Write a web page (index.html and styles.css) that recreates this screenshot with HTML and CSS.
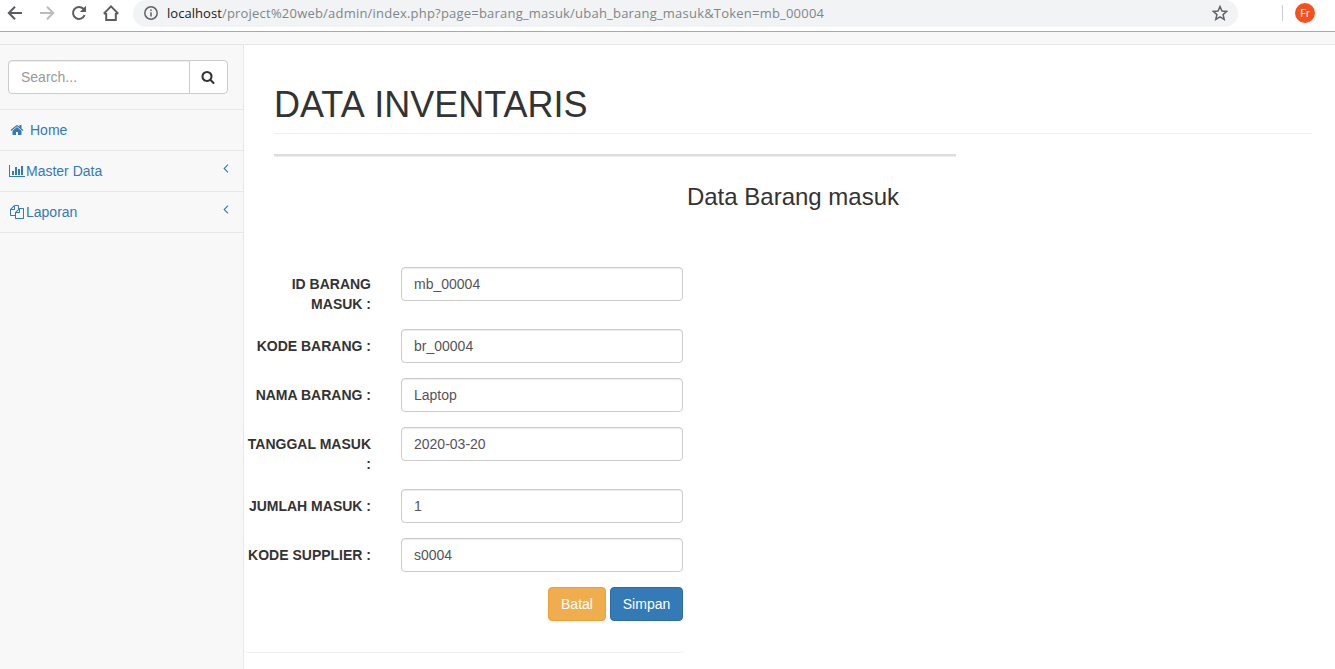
FILE: index.html
```html
<!DOCTYPE html>
<html lang="id">
<head>
<meta charset="utf-8">
<title>Data Inventaris</title>
<link rel="stylesheet" href="styles.css">
</head>
<body>
<header class="browser">
  <nav class="browser-nav">
    <svg class="tool" viewBox="0 0 16 16"><path d="M15 8H2M8 1.800L1.800 8 8 14.200"/></svg>
    <svg class="tool tool-off" viewBox="0 0 16 16"><path d="M1 8h13M8 1.800L14.200 8 8 14.200"/></svg>
    <svg class="tool" viewBox="0 0 16 16"><path d="M13.600 10.200A6 6 0 1 1 12.400 3.800L14 5.400"/><path class="solid" d="M15 .8V7H8.800z"/></svg>
    <svg class="tool" viewBox="0 0 16 16"><path d="M3.200 8v7h9.600V8M.8 8.600L8 1.400l7.200 7.200M.8 8.500h2.400M12.800 8.500h2.400"/></svg>
  </nav>
  <div class="address">
    <svg class="info" viewBox="0 0 14 14"><circle cx="7" cy="7" r="6.200"/><path d="M7 6.200v4.300M7 3.500v1.500"/></svg>
    <span class="url"><b>localhost</b>/project%20web/admin/index.php?page=barang_masuk/ubah_barang_masuk&amp;Token=mb_00004</span>
    <svg class="star" viewBox="0 0 14 14"><path d="M7 1.300l1.700 3.900 4.200.4-3.200 2.800 1 4.200L7 10.400l-3.700 2.200 1-4.200L1.100 5.600l4.200-.4z"/></svg>
  </div>
  <div class="profile"><span class="avatar">Fr</span></div>
</header>
<div class="navbar"></div>
<div class="layout">
  <aside class="sidebar">
    <form class="search">
      <input class="search-input" type="text" placeholder="Search...">
      <button class="search-button" type="button" aria-label="Search"><svg class="fa" viewBox="0 0 1792 1792"><path d="M1216 832q0-185-131.500-316.500t-316.500-131.500-316.500 131.500-131.500 316.500 131.500 316.500 316.500 131.500 316.500-131.500 131.500-316.500zm512 832q0 52-38 90t-90 38q-54 0-90-38l-343-342q-179 124-399 124-143 0-273.500-55.500t-225-150-150-225-55.500-273.500 55.500-273.500 150-225 225-150 273.500-55.500 273.500 55.500 225 150 150 225 55.500 273.500q0 220-124 399l343 343q37 37 37 90z"/></svg></button>
    </form>
    <a class="item item-home"><svg class="fa" viewBox="0 0 1792 1792"><path d="M1472 992v480q0 26-19 45t-45 19h-384v-384h-256v384h-384q-26 0-45-19t-19-45v-480q0-1 .5-3t.5-3l575-474 575 474q1 2 1 6zm223-69l-62 74q-8 9-21 11h-3q-13 0-21-7l-692-577-692 577q-12 8-24 7-13-2-21-11l-62-74q-8-10-7-23.500t11-21.500l719-599q32-26 76-26t76 26l244 204v-195q0-14 9-23t23-9h192q14 0 23 9t9 23v408l219 182q10 8 11 21.500t-7 23.500z"/></svg><span class="item-text">Home</span></a>
    <a class="item"><svg class="fa fa-wide" viewBox="0 0 2048 1792"><path d="M640 896v512h-256v-512h256zm384-512v1024h-256v-1024h256zm1024 1152v128h-2048v-1536h128v1408h1920zm-640-896v768h-256v-768h256zm384-384v1152h-256v-1152h256z"/></svg><span class="item-text">Master Data</span><svg class="angle" viewBox="0 0 6 9"><path d="M5 .7L1.200 4.500 5 8.300"/></svg></a>
    <a class="item item-files"><svg class="fa" viewBox="0 0 1792 1792"><path d="M1696 384q40 0 68 28t28 68v1216q0 40-28 68t-68 28h-960q-40 0-68-28t-28-68v-288h-544q-40 0-68-28t-28-68v-672q0-40 20-88t48-76l408-408q28-28 76-48t88-20h416q40 0 68 28t28 68v328q68-40 128-40h416zm-544 213l-299 299h299v-299zm-640-384l-299 299h299v-299zm196 647l316-316v-416h-384v416q0 40-28 68t-68 28h-416v640h512v-256q0-40 20-88t48-76zm956 804v-1152h-384v416q0 40-28 68t-68 28h-416v640h896z"/></svg><span class="item-text">Laporan</span><svg class="angle" viewBox="0 0 6 9"><path d="M5 .7L1.200 4.500 5 8.300"/></svg></a>
  </aside>
  <main class="content">
    <h1 class="page-title">DATA INVENTARIS</h1>
    <div class="rule"></div>
    <h3 class="form-title">Data Barang masuk</h3>
    <form class="form">
      <div class="row"><label class="label">ID BARANG<br>MASUK :</label><input class="field" value="mb_00004"></div>
      <div class="row"><label class="label">KODE BARANG :</label><input class="field" value="br_00004"></div>
      <div class="row"><label class="label">NAMA BARANG :</label><input class="field" value="Laptop"></div>
      <div class="row"><label class="label">TANGGAL MASUK<br>:</label><input class="field" value="2020-03-20"></div>
      <div class="row"><label class="label">JUMLAH MASUK :</label><input class="field" value="1"></div>
      <div class="row"><label class="label">KODE SUPPLIER :</label><input class="field" value="s0004"></div>
      <div class="actions"><button class="btn btn-warning" type="button">Batal</button><button class="btn btn-primary" type="button">Simpan</button></div>
    </form>
  </main>
</div>
</body>
</html>
```
FILE: styles.css
```css
* { box-sizing: border-box; }
body { margin: 0; height: 669px; overflow: hidden; display: flex; flex-direction: column; background: #fff; color: #333; font: 14px/20px "Liberation Sans", Arial, sans-serif; }
svg { flex: none; display: block; }
input, button { font: inherit; margin: 0; }

.browser { flex: none; display: flex; align-items: flex-start; height: 32px; border-bottom: 1px solid #a9a9ab; }
.browser-nav { display: flex; gap: 16px; width: 133px; padding: 5px 0 0 7px; }
.tool { width: 16px; height: 16px; fill: none; stroke: #5a5d61; stroke-width: 2; }
.tool-off { stroke: #babcbe; }
.tool .solid { fill: #5a5d61; stroke: none; }
.address { display: flex; align-items: center; width: 1105px; height: 27px; padding: 0 10px 1px 11px; background: #f1f3f4; border-radius: 14px; }
.info { width: 14px; height: 14px; fill: none; stroke: #5f6368; stroke-width: 1.5; }
.url { flex: 1; margin-left: 9px; font: 13px/20px "Open Sans", "Noto Sans", sans-serif; letter-spacing: .21px; color: #80868b; white-space: nowrap; }
.url b { font-weight: 400; letter-spacing: .05px; color: #202124; }
.star { width: 16px; height: 16px; fill: none; stroke: #5f6368; stroke-width: 1.3; }
.profile { display: flex; align-items: center; height: 16px; margin: 5px 0 0 44px; padding-left: 12px; border-left: 1px solid #ccc; }
.avatar { width: 20px; height: 20px; border-radius: 50%; background: #f4511e; color: #fff; font: 11px/21px Roboto, sans-serif; text-align: center; }

.navbar { flex: none; height: 13px; background: #f8f8f8; border-bottom: 1px solid #e7e7e7; }
.layout { flex: 1; display: flex; min-height: 0; }
.sidebar { flex: none; width: 244px; background: #f8f8f8; border-right: 1px solid #e7e7e7; }
.search { display: flex; height: 65px; padding: 15px 15px 15px 8px; border-bottom: 1px solid #e7e7e7; }
.search-input { width: 182px; height: 34px; padding: 6px 12px; border: 1px solid #ccc; border-radius: 4px 0 0 4px; box-shadow: inset 0 1px 1px rgba(0,0,0,.075); background: #fff; }
.search-input::placeholder { color: #999; opacity: 1; }
.search-button { display: flex; align-items: center; justify-content: center; width: 39px; height: 34px; margin-left: -1px; padding: 0 1px 0 0; border: 1px solid #ccc; border-radius: 0 4px 4px 0; background: #fff; color: #333; }
.fa { width: 14px; height: 14px; fill: currentColor; }
.item { display: flex; align-items: center; height: 41px; padding: 0 14px 0 9px; border-bottom: 1px solid #e7e7e7; color: #337ab7; }
.fa-wide { width: 16px; }
.item-home { padding-left: 10px; }
.item-home .item-text { margin-left: 6px; }
.item-files { padding-left: 10px; }
.item-text { flex: 1; margin-left: 1px; }
.item-files .item-text { margin-left: 2px; }
.angle { width: 6px; height: 9px; margin-bottom: 5px; fill: none; stroke: #337ab7; stroke-width: 1.1; }

.content { flex: 1; }
.page-title { width: 1038px; height: 89px; margin: 0 0 20px 30px; padding-top: 40px; border-bottom: 1px solid #eee; font-size: 36px; font-weight: 400; line-height: 39px; word-spacing: 1.5px; }
.rule { width: 682px; height: 3px; margin-left: 30px; background: #ddd; border-bottom: 1px solid #eee; }
.form-title { width: 1038px; height: 26px; margin: 27px 0 0 30px; font-size: 24px; font-weight: 400; line-height: 26px; text-align: center; }
.form { width: 440px; height: 386px; margin-top: 57px; border-bottom: 1px solid #f0f0f0; border-radius: 4px; }
.row { display: flex; align-items: flex-start; margin-bottom: 15px; }
.label { width: 127px; margin-right: 30px; padding-top: 7px; font-weight: 700; text-align: right; white-space: nowrap; }
.field { width: 282px; height: 34px; padding: 6px 12px; border: 1px solid #ccc; border-radius: 4px; box-shadow: inset 0 1px 1px rgba(0,0,0,.075); color: #555; background: #fff; }
.actions { display: flex; justify-content: flex-end; gap: 4px; padding-right: 1px; }
.btn { height: 34px; padding: 0; border: 1px solid; border-radius: 4px; color: #fff; }
.btn-warning { width: 58px; background: #f0ad4e; border-color: #eea236; }
.btn-primary { width: 73px; background: #337ab7; border-color: #2e6da4; }
```
